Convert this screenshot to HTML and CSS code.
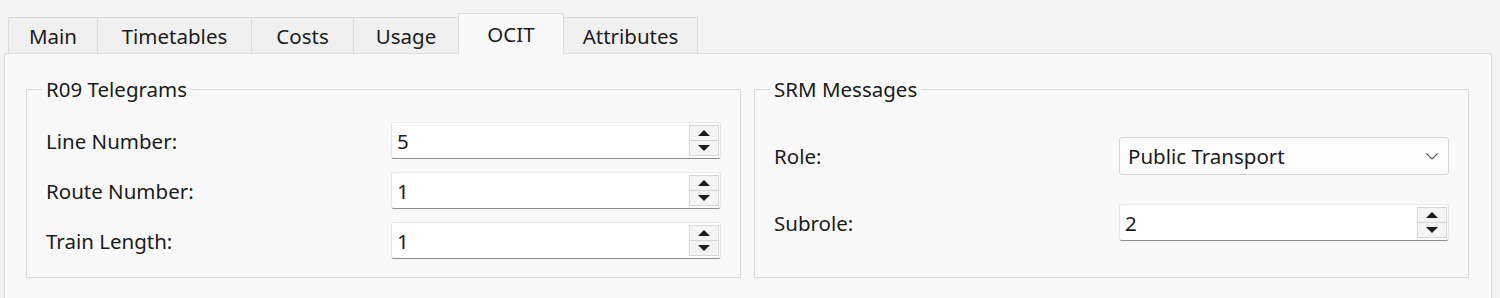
FILE: index.html
```html
<!DOCTYPE html>
<html lang="en">
<head>
	<meta charset="UTF-8">
	<title>Vehicle Properties - OCIT</title>
	<link rel="stylesheet" href="styles.css">
</head>
<body>
<div class="tabs">
	<div class="tab tab-main">Main</div>
	<div class="tab tab-timetables">Timetables</div>
	<div class="tab tab-costs">Costs</div>
	<div class="tab tab-usage">Usage</div>
	<div class="tab tab-ocit active">OCIT</div>
	<div class="tab tab-attributes">Attributes</div>
</div>
<div class="panel">
	<fieldset class="group">
		<legend>R09 Telegrams</legend>
		<div class="row">
			<label>Line Number:</label>
			<div class="spin"><span class="value">5</span><div class="arrows"><span class="up"></span><span class="down"></span></div></div>
		</div>
		<div class="row">
			<label>Route Number:</label>
			<div class="spin"><span class="value">1</span><div class="arrows"><span class="up"></span><span class="down"></span></div></div>
		</div>
		<div class="row">
			<label>Train Length:</label>
			<div class="spin"><span class="value">1</span><div class="arrows"><span class="up"></span><span class="down"></span></div></div>
		</div>
	</fieldset>
	<fieldset class="group spread">
		<legend>SRM Messages</legend>
		<div class="row tall">
			<label>Role:</label>
			<div class="combo">
				<span class="value">Public Transport</span>
				<svg class="chevron" width="12" height="7" viewBox="0 0 12 7"><polyline points="0.5,0.5 6,6 11.5,0.5" fill="none" stroke="#555" stroke-width="1.1"/></svg>
			</div>
		</div>
		<div class="row">
			<label>Subrole:</label>
			<div class="spin"><span class="value">2</span><div class="arrows"><span class="up"></span><span class="down"></span></div></div>
		</div>
	</fieldset>
</div>
</body>
</html>
```

FILE: styles.css
```css
body {
	margin:0;
	background:#f3f3f3;
	font-family: "Segoe UI", "Noto Sans", sans-serif;
	font-size:20.5px;
	color:#1b1b1b;
}

.tabs {
	display:flex;
	align-items:flex-start;
	height:41px;
	margin-top:13px;
	margin-bottom:-1px;
	padding-left:9px;
	position:relative;
	z-index:1;
}
.tab {
	box-sizing:border-box;
	height:36px;
	margin-top:4px;
	margin-left:-1px;
	padding-top:2px;
	border:1px solid #dcdcdc;
	border-bottom:none;
	background:#f0f0f0;
	line-height:32px;
	text-align:center;
}
.tab.active {
	height:41px;
	margin-top:0;
	padding-top:4px;
	background:#f9f9f9;
}
.tab-main { width:90px; }
.tab-timetables { width:155px; }
.tab-costs { width:103px; }
.tab-usage { width:106px; }
.tab-ocit { width:106px; }
.tab-attributes { width:135px; }

.panel {
	display:flex;
	gap:13px;
	align-items:stretch;
	box-sizing:border-box;
	width:1488px;
	height:260px;
	margin-left:4px;
	padding:22px 22px 0 21px;
	border:1px solid #dcdcdc;
	background:#f9f9f9;
}

.group {
	flex:1;
	display:flex;
	flex-direction:column;
	gap:13px;
	min-width:0;
	margin:0;
	padding:20px 19px 18px;
	border:1px solid #dcdcdc;
	height:202px;
	box-sizing:border-box;
}
.group legend {
	padding:0 4px;
	margin-left:-4px;
	line-height:26px;
}
.group.spread {
	padding-top:35px;
	gap:29px;
}

.row {
	display:grid;
	grid-template-columns:1fr 330px;
	align-items:center;
	height:37px;
}
.row.tall {
	height:38px;
}

.spin {
	box-sizing:border-box;
	display:flex;
	align-items:center;
	height:37px;
	padding:1px 1px 1px 5px;
	background:#fff;
	border:1px solid #e8e8e8;
	border-bottom-color:#8a8a8a;
	border-radius:3px;
}
.spin .value {
	flex:1;
}
.arrows {
	display:flex;
	flex-direction:column;
	box-sizing:border-box;
	width:30px;
	height:31px;
	border:1px solid #d6d6d6;
	background:#f4f4f4;
}
.arrows span {
	flex:1;
	display:flex;
	align-items:center;
	justify-content:center;
}
.arrows .up {
	border-bottom:1px solid #d6d6d6;
}
.arrows .up::after {
	content:"";
	border-left:6px solid transparent;
	border-right:6px solid transparent;
	border-bottom:6px solid #1a1a1a;
}
.arrows .down::after {
	content:"";
	border-left:6px solid transparent;
	border-right:6px solid transparent;
	border-top:6px solid #1a1a1a;
}

.combo {
	box-sizing:border-box;
	display:flex;
	align-items:center;
	height:38px;
	padding:0 10px 0 8px;
	background:#fdfdfd;
	border:1px solid #d4d4d4;
	border-radius:3px;
}
.combo .value {
	flex:1;
}
```
